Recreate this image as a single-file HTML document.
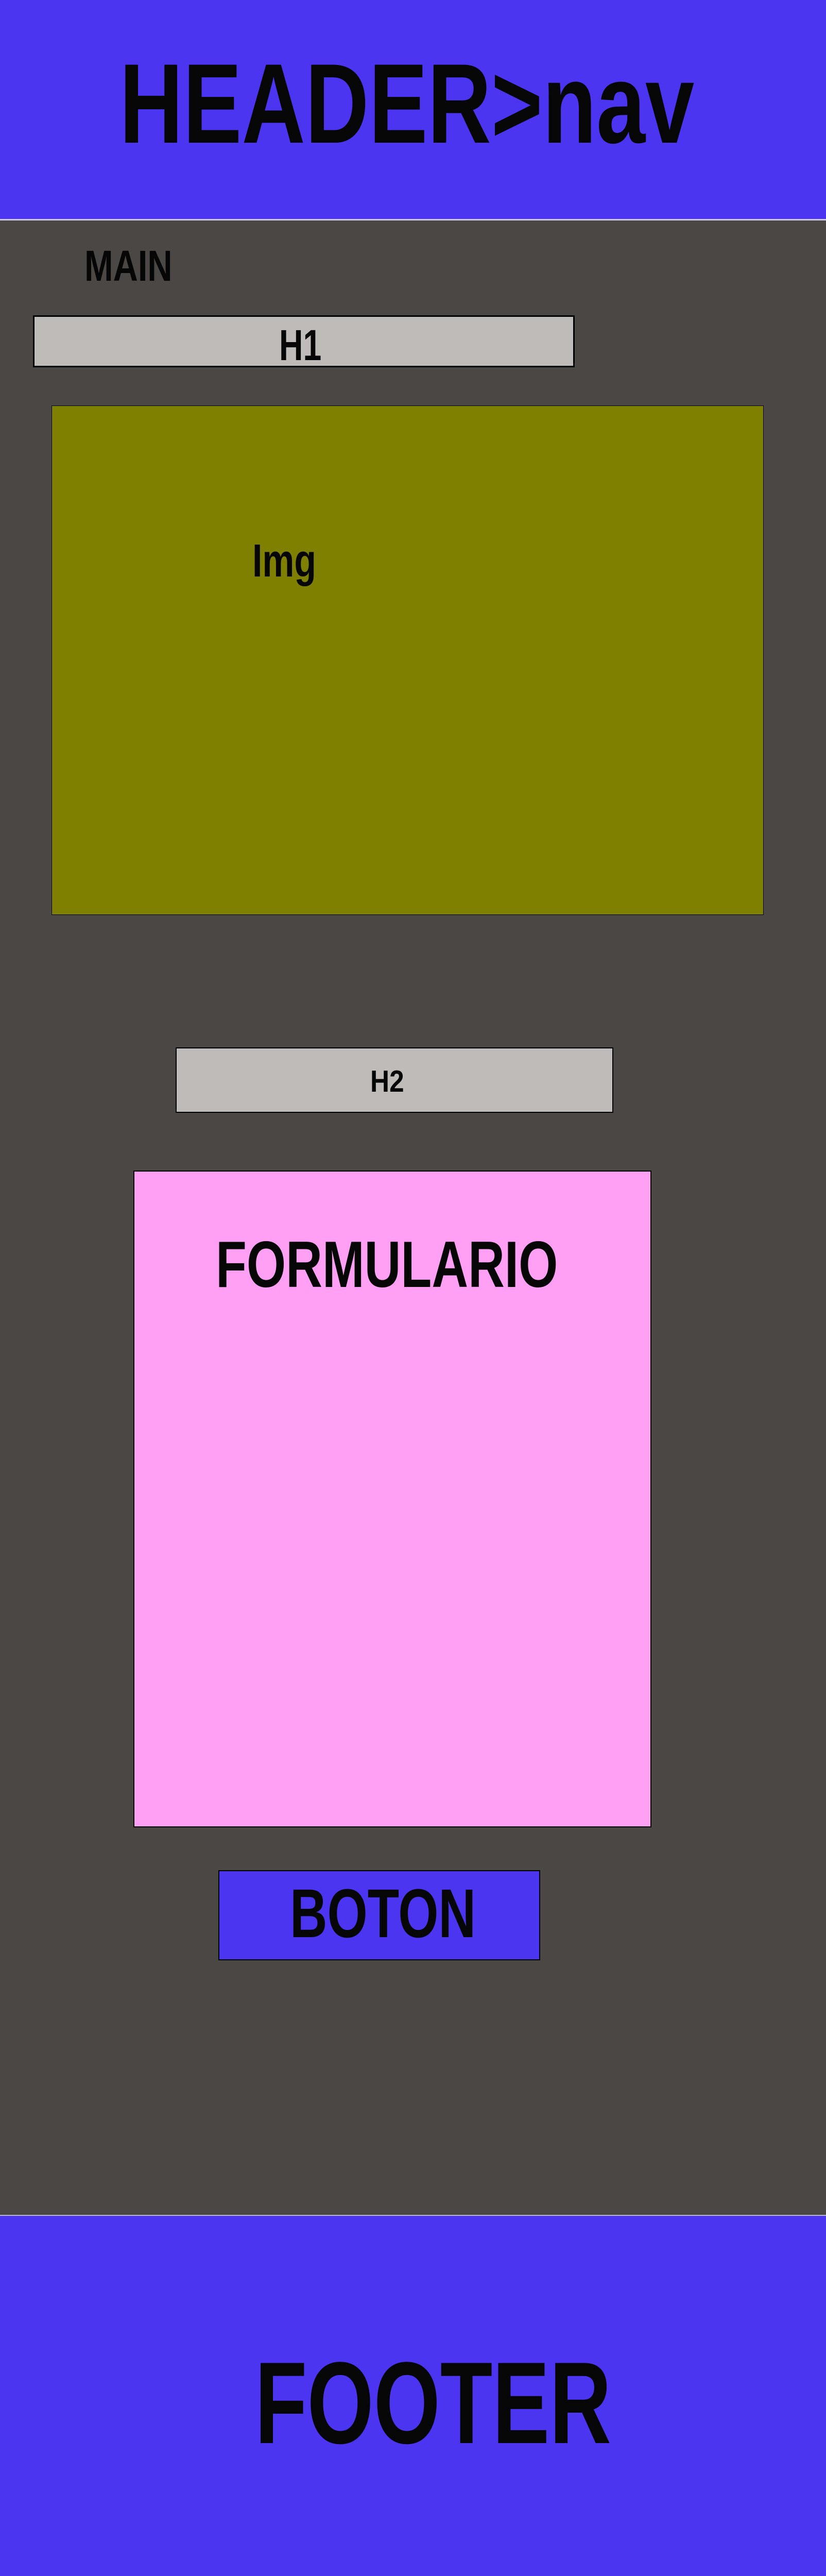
<!DOCTYPE html>
<html><head><meta charset="utf-8"><style>
*{margin:0;padding:0;box-sizing:border-box}
html,body{width:1604px;height:5025px;overflow:hidden;background:#4b4745}
#w{position:relative;width:1604px;height:5025px;overflow:hidden}
.a{position:absolute}
.t{position:absolute;font-family:"Liberation Sans",sans-serif;font-weight:bold;color:#060606;line-height:1;white-space:nowrap;transform-origin:0 0}
</style></head><body><div id="w">
<div class="a" style="left:0;top:0;width:1604px;height:425px;background:#4c35f0"></div>
<div class="a" style="left:0;top:425px;width:1604px;height:3px;background:#cbc7ea"></div>
<div class="t" style="left:232px;top:91px;font-size:220px;transform:scaleX(.777)">HEADER&gt;nav</div>

<div class="t" style="left:164px;top:474px;font-size:84px;transform:scaleX(.795)">MAIN</div>

<div class="a" style="left:64px;top:612px;width:1052px;height:101px;background:#bfbbb8;border:3px solid #000"></div>
<div class="t" style="left:542px;top:628px;font-size:84px;transform:scaleX(.766)">H1</div>

<div class="a" style="left:100px;top:787px;width:1383px;height:989px;background:#808000;border:1px solid #000"></div>
<div class="t" style="left:490px;top:1044px;font-size:90px;transform:scaleX(.775)">Img</div>

<div class="a" style="left:341px;top:2033px;width:850px;height:127px;background:#bfbbb8;border:2px solid #000"></div>
<div class="t" style="left:719px;top:2070px;font-size:59px;transform:scaleX(.87)">H2</div>

<div class="a" style="left:259px;top:2272px;width:1006px;height:1275px;background:#ffa0f5;border:2px solid #000"></div>
<div class="t" style="left:419px;top:2391px;font-size:127px;transform:scaleX(.772)">FORMULARIO</div>

<div class="a" style="left:424px;top:3630px;width:625px;height:175px;background:#4c35f0;border:2px solid #000"></div>
<div class="t" style="left:563px;top:3648px;font-size:134px;transform:scaleX(.75)">BOTON</div>

<div class="a" style="left:0;top:4299px;width:1604px;height:2px;background:#bbb"></div>
<div class="a" style="left:0;top:4301px;width:1604px;height:724px;background:#4c35f0"></div>
<div class="t" style="left:495px;top:4551px;font-size:226px;transform:scaleX(.735)">FOOTER</div>
</div></body></html>
